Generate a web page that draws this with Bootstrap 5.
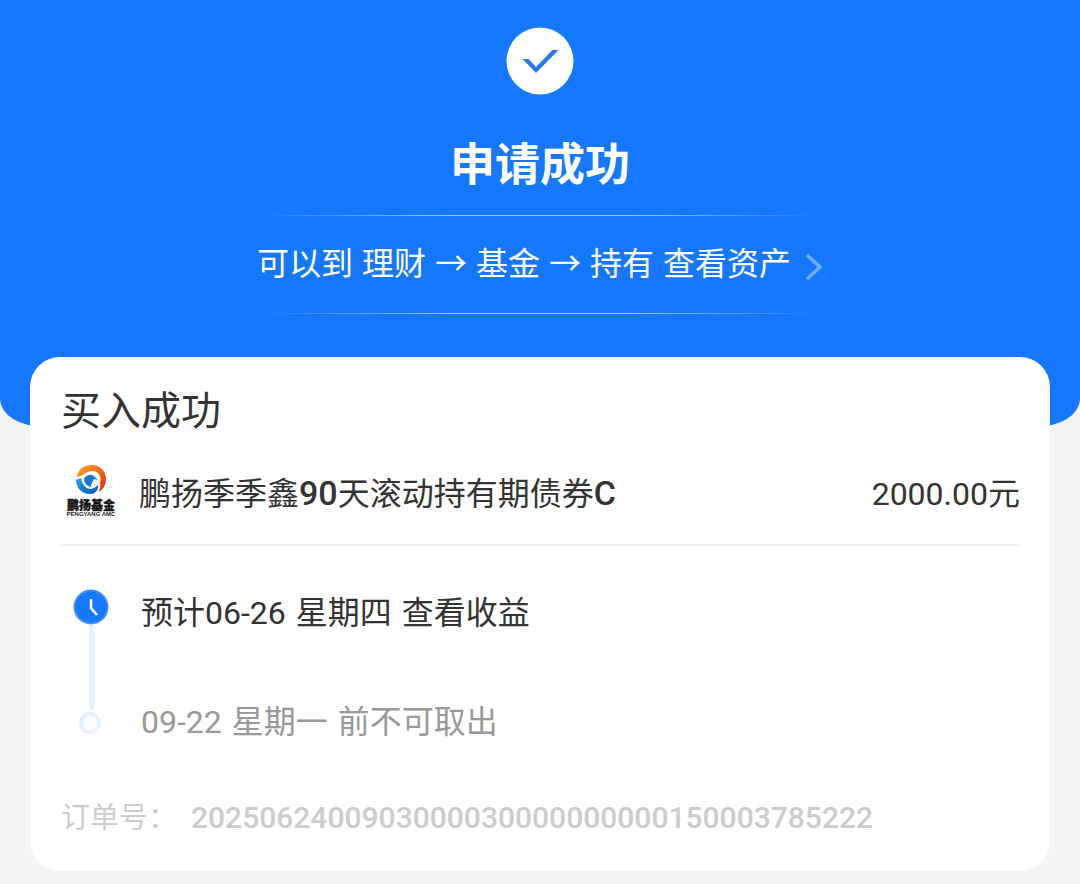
<!DOCTYPE html>
<html lang="zh-CN">
<head>
<meta charset="utf-8">
<meta name="viewport" content="width=device-width, initial-scale=1">
<title>申请成功</title>
<link rel="stylesheet" href="https://cdn.jsdelivr.net/npm/bootstrap@5.3.0/dist/css/bootstrap.min.css">
<style>
body { background: #f4f4f4; color: #333; font-family: Roboto, "Noto Sans CJK SC", sans-serif; font-size: 32px; line-height: 48px; }
.hero { background: #1677ff; border-radius: 0 0 44px 44px / 0 0 28px 28px; padding: 27px 0 113px; }
.hero-title { font-size: 45px; line-height: 64px; font-weight: 700; margin: 39px 0 17px; }
.fade-line { width: 560px; max-width: 100%; height: 1px; background: linear-gradient(90deg, transparent, #ffffff99 35%, #ffffff99 65%, transparent); }
.asset-link { line-height: 97px; gap: 9px; }
.asset-link svg { margin: 4px 0 0 5px; }
.receipt { border-radius: 30px; margin: -70px 30px 13px; padding: 25px 30px 29px; }
.receipt-title { font-size: 40px; line-height: 60px; margin-left: 1px; }
.fund { margin-top: 21px; padding-bottom: 26px; border-bottom: 2px solid #eee; }
.fund-name, .fund-amount { padding-top: 6px; }
.fund-name { margin-left: 17px; }
.latin { font-size: 34px; font-weight: 500; }
.steps { margin-top: 39px; }
.marker { width: 62px; }
.marker svg { display: block; }
.stem { width: 5px; height: 85px; background: #e7f1ff; }
.step-text { gap: 10px; margin-left: 19px; margin-top: 4px; }
.step-last { line-height: 24px; }
.muted { color: #999; }
.order { color: #ccc; font-size: 30px; gap: 14px; margin: 60px 0 0 1px; }
.order dt { font-size: 29px; }
.order dd { font-weight: 500; }
</style>
</head>
<body>
<header class="hero text-white d-flex flex-column align-items-center">
  <svg width="68" height="68" viewBox="0 0 68 68" role="img" aria-label="成功"><circle cx="34" cy="34" r="33.5" fill="#fff"/><path d="M16.5 32h6l7.500 8L46.500 23h6L30 46z" fill="#2878e8"/></svg>
  <h1 class="hero-title">申请成功</h1>
  <div class="fade-line"></div>
  <a href="#" class="asset-link d-flex align-items-center text-white text-decoration-none">
    <span>可以到</span><span>理财</span><span>→</span><span>基金</span><span>→</span><span>持有</span><span>查看资产</span>
    <svg width="18" height="26" viewBox="0 0 18 26" fill="none" stroke="#73adff" stroke-width="3.5" aria-hidden="true"><path d="M2 1l13 12L2 25"/></svg>
  </a>
  <div class="fade-line"></div>
</header>
<main class="receipt bg-white">
  <h2 class="receipt-title fw-normal mb-0">买入成功</h2>
  <section class="fund d-flex align-items-center">
    <svg width="62" height="54" viewBox="0 0 62 54" role="img" aria-label="鹏扬基金">
      <defs><linearGradient id="flame" x2="1" y2="1"><stop stop-color="#ffa51f"/><stop offset=".5" stop-color="#f66a1c"/><stop offset="1" stop-color="#e0200f"/></linearGradient><linearGradient id="wave" x2="1" y2="1"><stop stop-color="#22aef0"/><stop offset="1" stop-color="#0b4fae"/></linearGradient></defs>
      <path d="M17 13C18 5 24 1 32 1c8 0 14 6 14 14 0 6-3 11-8 13 2-3 3-6 2-9 2-6-1-12-8-12-6 0-9 5-15 6z" fill="url(#flame)"/>
      <path d="M16 16c1-1 3-1 5-2 1 6 4 10 9 11 3 0 6-2 8-4 1 4-2 9-8 9-8 0-14-6-14-14z" fill="url(#wave)"/>
      <path d="M24 15c2-4 7-6 11-2l3 3-4-1c-1 3-3 4-3 8-4-1-7-4-7-8z" fill="#1977cf"/>
      <text x="31" y="46" text-anchor="middle" font-size="12" font-weight="900" fill="#111" stroke="#111" stroke-width=".3">鹏扬基金</text>
      <text x="31" y="52" text-anchor="middle" font-family="Liberation Sans" font-size="6" font-weight="700" fill="#222">PENGYANG AMC</text>
    </svg>
    <span class="fund-name">鹏扬季季鑫<span class="latin">90</span>天滚动持有期债券<span class="latin">C</span></span>
    <span class="fund-amount ms-auto">2000.00元</span>
  </section>
  <ol class="steps list-unstyled mb-0">
    <li class="d-flex">
      <div class="marker d-flex flex-column align-items-center">
        <svg class="mt-1" width="36" height="36" viewBox="0 0 36 36" aria-hidden="true"><circle cx="18" cy="18" r="16.5" fill="#1677ff" stroke="#438eef" stroke-width="2"/><path d="M18 10v9l6 7" fill="none" stroke="#fff" stroke-width="2.5"/></svg>
        <div class="stem"></div>
      </div>
      <div class="step-text d-flex"><span>预计06-26</span><span>星期四</span><span>查看收益</span></div>
    </li>
    <li class="step-last d-flex">
      <div class="marker d-flex justify-content-center">
        <svg width="24" height="24" viewBox="0 0 24 24" aria-hidden="true"><circle cx="11" cy="13" r="9" fill="#fff" stroke="#e7f1ff" stroke-width="4"/></svg>
      </div>
      <div class="step-text mt-0 muted d-flex"><span>09-22</span><span>星期一</span><span>前不可取出</span></div>
    </li>
  </ol>
  <dl class="order d-flex">
    <dt class="fw-normal">订单号：</dt>
    <dd class="mb-0">2025062400903000030000000000150003785222</dd>
  </dl>
</main>
<script src="https://cdn.jsdelivr.net/npm/bootstrap@5.3.0/dist/js/bootstrap.bundle.min.js"></script>
</body>
</html>
